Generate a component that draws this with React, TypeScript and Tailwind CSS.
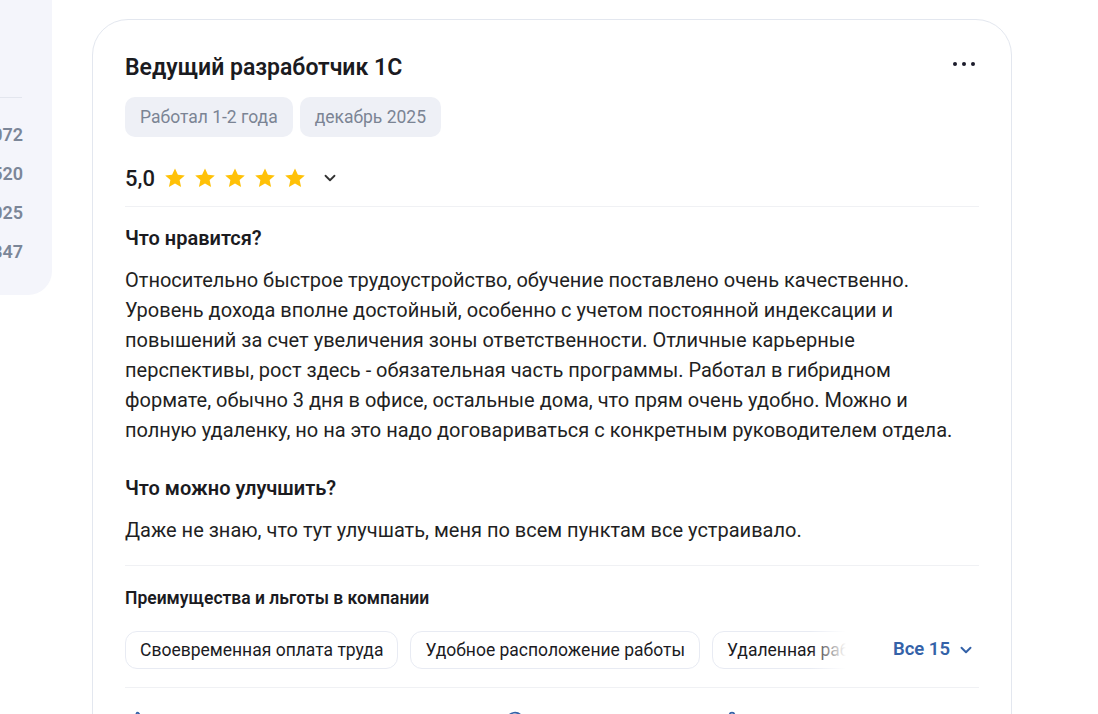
import { ChevronDown, MessageCircle, Share2, ThumbsUp } from "lucide-react";

const Star = () => (
  <svg viewBox="0 0 24 24" className="size-[24px]" fill="#ffc107">
    <path d="M12 2.5l2.9 6.3 6.9.7-5.2 4.6 1.5 6.8L12 17.4l-6.1 3.5 1.5-6.8-5.2-4.6 6.9-.7z" />
  </svg>
);

const sideNumbers = ["4 072", "3 520", "2 025", "1 347"];
const benefits = [
  "Своевременная оплата труда",
  "Удобное расположение работы",
  "Удаленная работа",
];

const App = () => {
  return (
    <div
      className="w-full h-[714px] overflow-hidden bg-white flex items-start text-[#1b1b1f]"
      style={{ fontFamily: "Roboto, 'Noto Sans', sans-serif" }}
    >
      {/* left summary panel, mostly scrolled off */}
      <div className="w-[52px] shrink-0 h-[295px] bg-[#f4f5fb] rounded-br-[24px] overflow-hidden">
        <div className="h-[98px] border-b border-[#e3e6ee] mr-[30px]" />
        <div className="flex flex-col items-end pr-[29px] pt-[25px] gap-[15px]">
          {sideNumbers.map((n) => (
            <div
              key={n}
              className="h-[24px] leading-[24px] whitespace-nowrap text-[18px] font-semibold text-[#7b8698]"
            >
              {n}
            </div>
          ))}
        </div>
      </div>

      {/* review card */}
      <div className="ml-[40px] mt-[19px] w-[920px] shrink-0 rounded-[36px] border border-[#e3e7ef] px-8 pt-[33px] pb-8">
        <div className="flex items-start justify-between">
          <h2 className="text-[23px] leading-[30px] font-semibold">
            Ведущий разработчик 1С
          </h2>
          <div className="flex items-center gap-[5px] mt-[9px] mr-[4px]">
            <span className="size-[4px] rounded-full bg-[#1b1b2b]" />
            <span className="size-[4px] rounded-full bg-[#1b1b2b]" />
            <span className="size-[4px] rounded-full bg-[#1b1b2b]" />
          </div>
        </div>

        <div className="flex gap-[7px] mt-[14px]">
          <span className="h-10 px-[15px] flex items-center rounded-[10px] bg-[#eef0f6] text-[17.5px] text-[#7b8494]">
            Работал 1-2 года
          </span>
          <span className="h-10 px-[15px] flex items-center rounded-[10px] bg-[#eef0f6] text-[17.5px] text-[#7b8494]">
            декабрь 2025
          </span>
        </div>

        <div className="flex items-center h-8 mt-[25px]">
          <span className="text-[22px] font-medium mr-[8px]">5,0</span>
          <div className="flex gap-[6px]">
            <Star />
            <Star />
            <Star />
            <Star />
            <Star />
          </div>
          <ChevronDown className="size-[18px] ml-[14px] text-[#333]" strokeWidth={2.4} />
        </div>

        <div className="mt-3 border-t border-[#f0f1f4]" />

        <h3 className="mt-[19px] text-[20px] leading-6 font-semibold">Что нравится?</h3>
        <p className="mt-[15px] text-[20px] leading-[30px] text-[#1f1f23]">
          Относительно быстрое трудоустройство, обучение поставлено очень качественно.
          <br />
          Уровень дохода вполне достойный, особенно с учетом постоянной индексации и
          <br />
          повышений за счет увеличения зоны ответственности. Отличные карьерные
          <br />
          перспективы, рост здесь - обязательная часть программы. Работал в гибридном
          <br />
          формате, обычно 3 дня в офисе, остальные дома, что прям очень удобно. Можно и
          <br />
          полную удаленку, но на это надо договариваться с конкретным руководителем отдела.
        </p>

        <h3 className="mt-[31px] text-[20px] leading-6 font-semibold">Что можно улучшить?</h3>
        <p className="mt-[15px] text-[20px] leading-[30px] text-[#1f1f23]">
          Даже не знаю, что тут улучшать, меня по всем пунктам все устраивало.
        </p>

        <div className="mt-5 border-t border-[#f0f1f4]" />

        <h4 className="mt-[20px] text-[17.5px] leading-6 font-semibold">
          Преимущества и льготы в компании
        </h4>
        <div className="flex items-center mt-[21px]">
          <div className="relative flex-1 overflow-hidden">
            <div className="flex gap-3">
              {benefits.map((b) => (
                <span
                  key={b}
                  className="h-[38px] px-[14px] shrink-0 flex items-center whitespace-nowrap rounded-[12px] border border-[#e8ebf3] text-[17.5px]"
                >
                  {b}
                </span>
              ))}
            </div>
            <div className="absolute right-0 top-0 h-full w-[36px] bg-gradient-to-r from-transparent to-white" />
          </div>
          <button className="ml-[47px] mr-[4px] flex items-center gap-[7px] text-[18.5px] font-semibold text-[#3462a8]">
            Все 15
            <ChevronDown className="size-[18px]" strokeWidth={2.6} />
          </button>
        </div>

        <div className="mt-[18px] border-t border-[#f0f1f4]" />

        <div className="flex items-center mt-[21px] text-[#3462a8]">
          <div className="w-[378px] flex items-center gap-2 ml-[2px]">
            <ThumbsUp className="size-[20px]" />
            <span className="text-[16px]">Полезно</span>
          </div>
          <div className="w-[212px] flex items-center gap-2">
            <MessageCircle className="size-[20px]" />
            <span className="text-[16px]">Ответить</span>
          </div>
          <div className="flex items-center gap-2">
            <Share2 className="size-[20px]" />
            <span className="text-[16px]">Поделиться</span>
          </div>
        </div>
      </div>
    </div>
  );
};

export default App;
